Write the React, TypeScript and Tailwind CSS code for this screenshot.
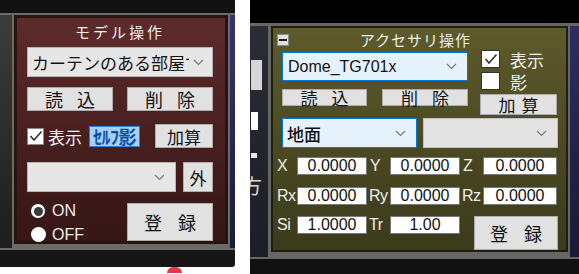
import React from 'react';

const Chevron = ({ className = '' }: { className?: string }) => (
  <svg width="11" height="7" viewBox="0 0 11 7" className={className}>
    <polyline points="1,1 5.5,5.5 10,1" fill="none" stroke="#7a7a7a" strokeWidth="1.2" />
  </svg>
);

const Check = () => (
  <svg width="14" height="12" viewBox="0 0 14 12">
    <polyline points="1.5,6 5,10 12.5,1.5" fill="none" stroke="#333" strokeWidth="1.6" />
  </svg>
);

function WinButton({ children, className = '' }: { children: React.ReactNode; className?: string }) {
  return (
    <div
      className={`flex items-center justify-center bg-[#e1e1e1] border border-[#adadad] text-[#111] leading-none ${className}`}
    >
      {children}
    </div>
  );
}

// two kanji with a wide gap, like "読 込"
function Spaced({ a, b, gap = 'gap-[14px]' }: { a: string; b: string; gap?: string }) {
  return (
    <span className={`flex ${gap}`}>
      <span>{a}</span>
      <span>{b}</span>
    </span>
  );
}

function ModelPanel() {
  return (
    <div className="w-[214px] border-[3px] border-[#2a1313] bg-gradient-to-b from-[#5e2b2b] to-[#361616] flex flex-col pl-[10px] pr-[12px]">
      <div className="mt-[3px] h-[20px] flex items-center justify-center text-[15px] tracking-[3px] text-[#eeeeee] leading-none">
        モデル操作
      </div>

      <div className="mt-[6px] h-[30px] flex items-center bg-[#e6e6e6] border border-[#b5b5b5]">
        <span className="flex-1 overflow-hidden whitespace-nowrap pl-[4px] text-[17px] leading-none text-[#111]">
          カーテンのある部屋です
        </span>
        <Chevron className="ml-[4px] mr-[8px]" />
      </div>

      <div className="mt-[10px] h-[24px] flex justify-between text-[18px]">
        <WinButton className="w-[86px]">
          <Spaced a="読" b="込" />
        </WinButton>
        <WinButton className="w-[86px]">
          <Spaced a="削" b="除" />
        </WinButton>
      </div>

      <div className="mt-[13px] h-[24px] flex items-center">
        <div className="w-[17px] h-[17px] bg-white border border-[#8a8a8a] flex items-center justify-center">
          <Check />
        </div>
        <span className="ml-[4px] text-[17px] leading-none text-[#eeeeee]">表示</span>
        <span className="ml-[7px] h-[21px] px-[3px] flex items-center bg-[#a6d0f5] border border-[#2f7fd8] text-[#0a4fa8] font-bold text-[18px] leading-none tracking-[-0.5px]">
          ｾﾙﾌ影
        </span>
        <WinButton className="ml-auto w-[58px] h-[24px] text-[17px]">加算</WinButton>
      </div>

      <div className="mt-[14px] h-[30px] flex">
        <div className="w-[149px] flex items-center justify-end bg-[#e6e6e6] border border-[#b5b5b5]">
          <Chevron className="mr-[10px]" />
        </div>
        <WinButton className="ml-auto w-[30px] text-[17px]">外</WinButton>
      </div>

      <div className="mt-[11px] h-[38px] flex">
        <div className="flex flex-col text-[16px] text-[#eeeeee] leading-none">
          <div className="mt-[1px] h-[14px] flex items-center">
            <div className="ml-[4px] w-[14px] h-[14px] rounded-full bg-white flex items-center justify-center">
              <div className="w-[9px] h-[9px] rounded-full bg-[#3a3a3a]" />
            </div>
            <span className="ml-[7px] font-['Liberation_Sans',sans-serif]">ON</span>
          </div>
          <div className="mt-[9px] h-[15px] flex items-center">
            <div className="ml-[4px] w-[15px] h-[15px] rounded-full bg-white" />
            <span className="ml-[6px] font-['Liberation_Sans',sans-serif]">OFF</span>
          </div>
        </div>
        <WinButton className="ml-auto w-[86px] h-[38px] text-[18px]">
          <Spaced a="登" b="録" gap="gap-[16px]" />
        </WinButton>
      </div>
    </div>
  );
}

function LeftShot() {
  return (
    <div className="w-[235px] h-[274px] flex flex-col">
      <div className="h-[13px] bg-[#121212]" />
      <div className="h-[237px] bg-[#6a6a6a] flex py-[2px]">
        <div className="w-[12px] bg-gradient-to-b from-[#3c3c3c] to-[#1e1e1e]" />
        <div className="ml-[2px]">
          <ModelPanel />
        </div>
        <div className="ml-[2px] w-[5px] bg-gradient-to-b from-[#36356c] to-[#1b1b3a]" />
      </div>
      <div className="h-[17px] bg-[#161616] rounded-br-[3px]" />
      <div className="h-[7px] bg-white">
        <div className="ml-[167px] w-[15px] h-[6px] rounded-t-full bg-[#e23a44]" />
      </div>
    </div>
  );
}

function Field({ value, w = 'w-[70px]' }: { value: string; w?: string }) {
  return (
    <div
      className={`${w} h-[18px] bg-white border border-[#777] flex items-center justify-center text-[16px] leading-none text-[#111] font-['Liberation_Sans',sans-serif]`}
    >
      {value}
    </div>
  );
}

function Label({ text, className = '' }: { text: string; className?: string }) {
  return (
    <div
      className={`h-[18px] flex items-center text-[16px] leading-none tracking-[-0.5px] text-[#eeeeee] font-['Liberation_Sans',sans-serif] ${className}`}
    >
      {text}
    </div>
  );
}

function AccessoryPanel() {
  return (
    <div className="w-[297px] border-2 border-[#1f1f0d] bg-gradient-to-b from-[#5d5b2b] to-[#3b3a1b] flex flex-col">
      <div className="mt-[3px] h-[17px] flex items-center">
        <div className="ml-[4px] w-[12px] h-[12px] bg-[#e0e0e0] border border-[#8a8a8a] flex items-center justify-center">
          <div className="w-[8px] h-[2px] bg-[#222]" />
        </div>
        <div className="flex-1 mr-[24px] text-center text-[15px] tracking-[1px] leading-none text-[#eeeeee]">
          アクセサリ操作
        </div>
      </div>

      <div className="mt-[2px] flex pl-[9px]">
        <div className="w-[186px] flex flex-col">
          <div className="mt-[2px] h-[29px] flex items-center bg-[#e5f1fb] border border-[#0078d7]">
            <span className="flex-1 pl-[5px] text-[16px] leading-none text-[#111] font-['Liberation_Sans',sans-serif]">
              Dome_TG701x
            </span>
            <Chevron className="mr-[10px]" />
          </div>
          <div className="mt-[8px] h-[17px] flex justify-between text-[17px]">
            <WinButton className="w-[85px]">
              <Spaced a="読" b="込" />
            </WinButton>
            <WinButton className="w-[86px]">
              <Spaced a="削" b="除" />
            </WinButton>
          </div>
        </div>

        <div className="ml-[12px] flex flex-col">
          <div className="h-[18px] flex items-center">
            <div className="ml-[1px] w-[19px] h-[18px] bg-white border border-[#333] flex items-center justify-center">
              <Check />
            </div>
            <span className="ml-[10px] text-[17px] leading-none text-[#eeeeee]">表示</span>
          </div>
          <div className="mt-[4px] h-[18px] flex items-center">
            <div className="ml-[1px] w-[19px] h-[18px] bg-white border border-[#333]" />
            <span className="ml-[10px] text-[17px] leading-none text-[#eeeeee]">影</span>
          </div>
          <WinButton className="mt-[4px] w-[77px] h-[21px] text-[17px]">
            <Spaced a="加" b="算" gap="gap-[6px]" />
          </WinButton>
        </div>
      </div>

      <div className="mt-[3px] h-[30px] flex pl-[9px] gap-[6px]">
        <div className="w-[135px] flex items-center bg-[#e5f1fb] border border-[#0078d7]">
          <span className="flex-1 pl-[4px] text-[17px] font-medium leading-none text-[#111]">地面</span>
          <Chevron className="mr-[10px]" />
        </div>
        <div className="w-[135px] flex items-center justify-end bg-[#e3e3e3] border border-[#c2c2c2]">
          <Chevron className="mr-[10px]" />
        </div>
      </div>

      <div className="mt-[9px] pl-[4px] flex flex-col">
        <div className="flex">
          <Label text="X" className="w-[20px]" />
          <Field value="0.0000" />
          <Label text="Y" className="w-[23px] pl-[3px]" />
          <Field value="0.0000" />
          <Label text="Z" className="w-[23px] pl-[3px]" />
          <Field value="0.0000" w="w-[74px]" />
        </div>
        <div className="mt-[12px] flex">
          <Label text="Rx" className="w-[20px]" />
          <Field value="0.0000" />
          <Label text="Ry" className="w-[23px] pl-[2px]" />
          <Field value="0.0000" />
          <Label text="Rz" className="w-[23px] pl-[2px]" />
          <Field value="0.0000" w="w-[74px]" />
        </div>
        <div className="mt-[11px] flex items-start">
          <Label text="Si" className="w-[20px]" />
          <Field value="1.0000" />
          <Label text="Tr" className="w-[23px] pl-[2px]" />
          <Field value="1.00" />
          <WinButton className="ml-[14px] w-[84px] h-[34px] text-[18px]">
            <Spaced a="登" b="録" gap="gap-[16px]" />
          </WinButton>
        </div>
      </div>
    </div>
  );
}

function RightShot() {
  return (
    <div className="w-[329px] h-[274px] flex flex-col">
      <div className="h-[23px] bg-black" />
      <div className="h-[236px] bg-[#666666] flex pt-[3px] pb-[2px]">
        <div className="w-[18px] overflow-hidden bg-gradient-to-b from-[#2c2d34] to-[#1d1e25] flex flex-col">
          <div className="mt-[34px] ml-[1px] w-[11px] h-[30px] bg-[#d6d6d6]" />
          <div className="mt-[22px] ml-[1px] w-[7px] h-[18px] bg-white" />
          <div className="mt-[23px] ml-[1px] w-[6px] h-[5px] bg-[#e8e8e8]" />
          <div className="mt-[18px] -ml-[8px] text-[20px] leading-none text-[#d8d8d8]">方</div>
        </div>
        <div className="ml-[3px]">
          <AccessoryPanel />
        </div>
        <div className="ml-[2px] w-[9px] bg-gradient-to-b from-[#2e2d62] to-[#1a1a36]" />
      </div>
      <div className="h-[15px] bg-[#111111]" />
    </div>
  );
}

export default function App() {
  return (
    <div className="w-[579px] h-[274px] bg-white flex gap-[15px] overflow-hidden font-['Noto_Sans_CJK_JP',sans-serif]">
      <LeftShot />
      <RightShot />
    </div>
  );
}
